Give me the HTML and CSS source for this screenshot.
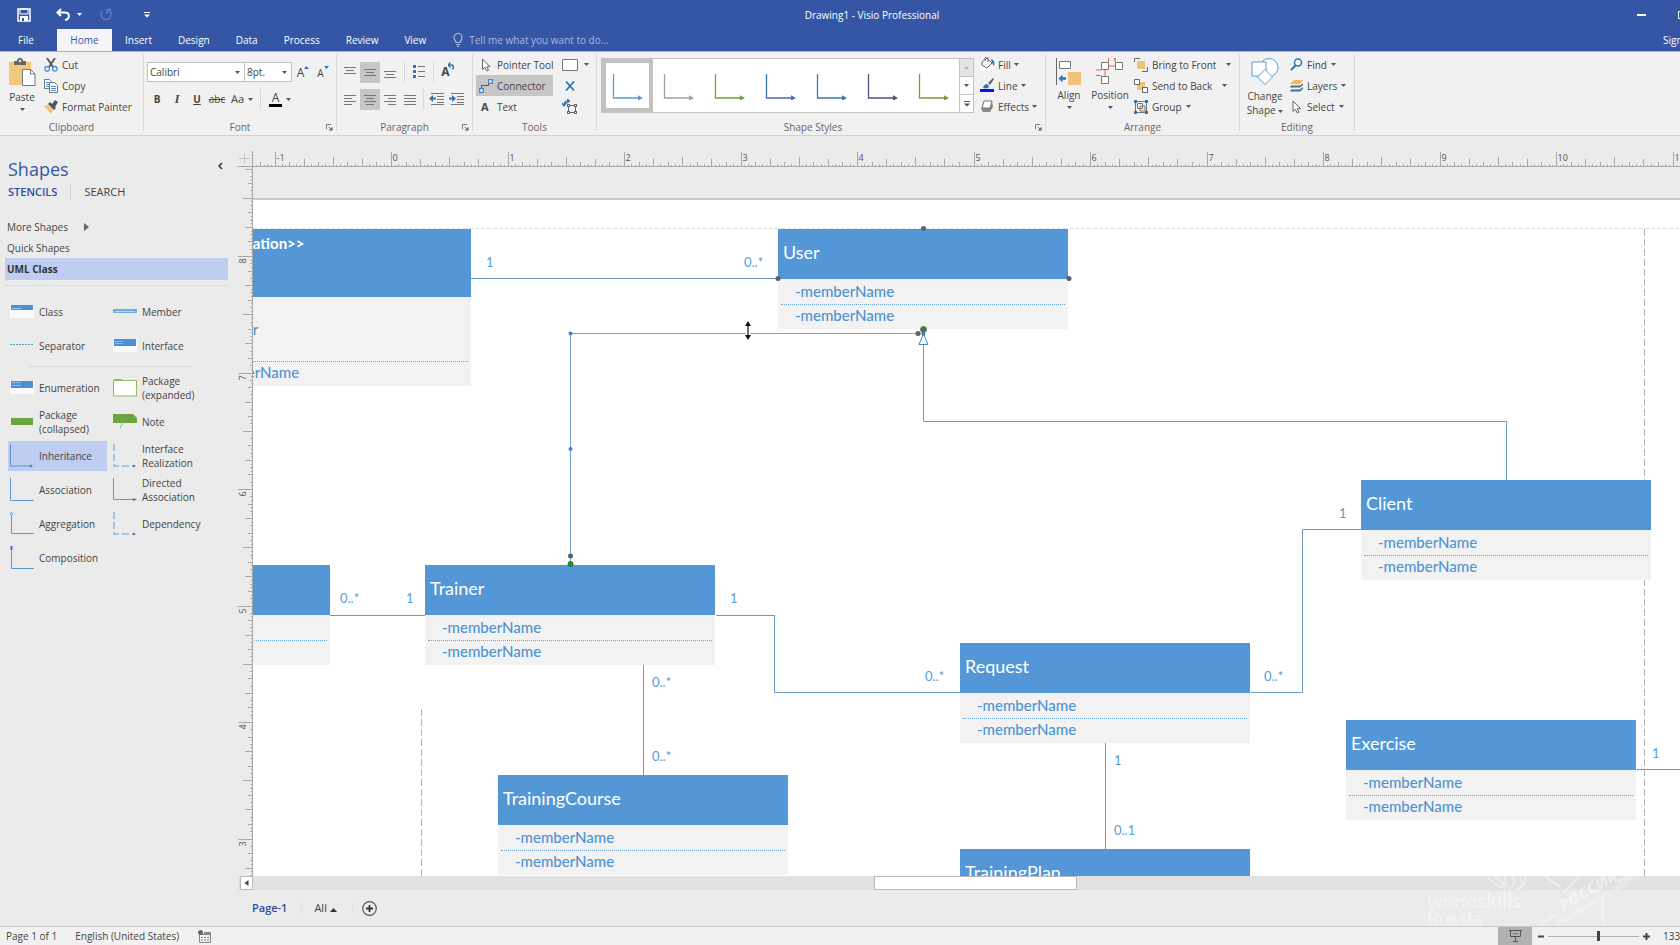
FILE: index.html
```html
<!DOCTYPE html>
<html lang="en">
<head>
<meta charset="utf-8">
<title>Drawing1 - Visio Professional</title>
<link rel="stylesheet" href="styles.css">
</head>
<body>
<svg class="defs" aria-hidden="true">
  <symbol id="caret" viewBox="0 0 5 3"><path d="M0 0h5L2.500 3z"/></symbol>
  <symbol id="launcher" viewBox="0 0 8 8"><path d="M.5 6V.5H6M3 3l3 3M7 3.500V7H3.500" fill="none" stroke="currentColor"/><path d="M7 4v3H4z"/></symbol>
  <symbol id="elbow" viewBox="0 0 32 28"><path d="M1.500 2v24H27" fill="none" stroke="currentColor" stroke-width="1.300"/><path d="M26 23.300l5 2.700-5 2.700z" fill="currentColor"/></symbol>
  <symbol id="pointer" viewBox="0 0 10 14"><path d="M1.500 1v10.500L4 9.300l1.800 3.700 1.700-.8-1.700-3.500H9z" fill="#fff" stroke="#666"/></symbol>
</svg>

<header class="topbar">
  <div class="titlebar">
    <div class="quick">
      <button class="tb-btn save" aria-label="Save"><svg width="14" height="14" viewBox="0 0 14 14"><path d="M1 1h12v12H1z" fill="none" stroke="#fff" stroke-width="1.500"/><path d="M3 1h8v5H3z" fill="none" stroke="#fff"/><path d="M3 8h8v5H3z" fill="#fff"/><path d="M5 10h2v3H5z" fill="#3556a5"/></svg></button>
      <button class="tb-btn undo" aria-label="Undo"><svg width="14" height="13" viewBox="0 0 14 13"><path d="M1.500 4.500H8.500c6 0 5.500 6.500.5 7.500M5 1L1.500 4.500 5 8" fill="none" stroke="#fff" stroke-width="2"/></svg></button>
      <button class="tb-btn undo-more" aria-label="Undo list"><svg width="5" height="3" fill="#fff"><use href="#caret"/></svg></button>
      <button class="tb-btn redo" aria-label="Repeat"><svg width="13" height="13" viewBox="0 0 13 13"><path d="M3.500 3A5 5 0 1 0 8 1.500M8 6V1.500h4" fill="none" stroke="#5f7bc0" stroke-width="1.500"/></svg></button>
      <button class="tb-btn" aria-label="Customize toolbar"><svg width="6" height="6" viewBox="0 0 6 6"><path d="M0 0h6v1H0zM0 2.500h6L3 5.500z" fill="#fff"/></svg></button>
    </div>
    <h1 class="doc-title">Drawing1 - Visio Professional</h1>
    <div class="window-btns">
      <button class="tb-btn" aria-label="Minimize"><svg width="9" height="2"><path d="M0 0h9v2H0z" fill="#fff"/></svg></button>
      <button class="tb-btn max" aria-label="Maximize"><svg width="9" height="8"><path d="M.5.5h8v7h-8z" fill="none" stroke="#fff"/></svg></button>
    </div>
  </div>
  <nav class="tabs">
    <button class="tab file">File</button>
    <button class="tab active">Home</button>
    <button class="tab">Insert</button>
    <button class="tab">Design</button>
    <button class="tab">Data</button>
    <button class="tab">Process</button>
    <button class="tab">Review</button>
    <button class="tab">View</button>
    <label class="tell"><svg width="10" height="14" viewBox="0 0 10 14"><path d="M3 9.500C3 8 1 7 1 4.500a4 4 0 0 1 8 0C9 7 7 8 7 9.500zM3 11.500h4M4 13.300h2" fill="none" stroke="#a9b9e2" stroke-width="1.200"/></svg><input type="text" aria-label="Tell me" placeholder="Tell me what you want to do..."></label>
    <a class="signin" href="#">Sign in</a>
  </nav>
</header>

<section class="ribbon" aria-label="Ribbon">
  <div class="group g-clip">
    <div class="tools">
      <button class="big paste"><svg width="28" height="29" viewBox="0 0 28 29"><path d="M1 4h22v23H1z" fill="#f1c880"/><path d="M6 3h3a3 3 0 0 1 6 0h3v4H6z" fill="#666"/><circle cx="12" cy="3" r="1.200" fill="#f1f1f1"/><path d="M14.500 11.500h8l4.500 4.500v11.500H14.500z" fill="#fff" stroke="#777"/><path d="M22.500 11.500V16H27" fill="none" stroke="#777"/></svg><span>Paste</span><svg class="caret"><use href="#caret"/></svg></button>
      <div class="col">
        <button class="cmd"><svg width="14" height="14" viewBox="0 0 14 14"><path d="M3 0l6 9M11 0L5 9" stroke="#555" stroke-width="1.800"/><circle cx="3.200" cy="10.800" r="2.300" fill="none" stroke="#4f8cc9" stroke-width="1.300"/><circle cx="10.800" cy="10.800" r="2.300" fill="none" stroke="#4f8cc9" stroke-width="1.300"/></svg>Cut</button>
        <button class="cmd"><svg width="14" height="14" viewBox="0 0 14 14"><path d="M.5.500h5l2 2v7h-7z" fill="#fff" stroke="#777"/><path d="M2 3.500h3M2 5.500h3M2 7.500h3" stroke="#4f8cc9"/><path d="M5.500 3.500h5l3 3v7h-8z" fill="#fff" stroke="#777"/><path d="M7 7.500h5M7 9.500h5M7 11.500h5" stroke="#4f8cc9"/></svg>Copy</button>
        <button class="cmd"><svg width="14" height="14" viewBox="0 0 14 14"><path d="M0 6l4-1 5 5-2 4z" fill="#f1c27a"/><path d="M4 4l2-2 6 6-2 2zM8 4l3-4 3 2-3 5z" fill="#555"/></svg>Format Painter</button>
      </div>
    </div>
    <h2>Clipboard</h2>
  </div>

  <div class="group g-font">
    <div class="tools rows">
      <div class="row">
        <span class="combo"><select class="font-name" aria-label="Font"><option>Calibri</option></select><svg class="caret"><use href="#caret"/></svg></span>
        <span class="combo"><select class="font-size" aria-label="Font size"><option>8pt.</option></select><svg class="caret"><use href="#caret"/></svg></span>
        <button class="ico grow" aria-label="Increase font size"><span class="letter">A</span><svg width="5" height="3" viewBox="0 0 5 3"><path d="M0 3h5L2.500 0z" fill="#2e75b6"/></svg></button>
        <button class="ico shrink" aria-label="Decrease font size"><span class="letter">A</span><svg width="5" height="3" fill="#2e75b6"><use href="#caret"/></svg></button>
      </div>
      <div class="row second">
        <button class="ico"><b>B</b></button>
        <button class="ico"><i class="ital">I</i></button>
        <button class="ico"><b class="under">U</b></button>
        <button class="ico"><s>abc</s></button>
        <button class="ico wide">Aa <svg class="caret"><use href="#caret"/></svg></button>
        <span class="vsep"></span>
        <button class="ico wide color"><span class="fc">A</span><svg class="caret"><use href="#caret"/></svg></button>
      </div>
    </div>
    <h2>Font</h2><button class="launch" aria-label="Font settings"><svg width="7" height="7"><use href="#launcher"/></svg></button>
  </div>

  <div class="group g-para">
    <div class="tools rows">
      <div class="row">
        <button class="ico" aria-label="Align top"><svg width="14" height="14"><path d="M1 2.500h12M3 5.500h8M1 8.500h12" stroke="#777"/></svg></button>
        <button class="ico on" aria-label="Align middle"><svg width="14" height="14"><path d="M1 4.500h12M3 7.500h8M1 10.500h12" stroke="#777"/></svg></button>
        <button class="ico" aria-label="Align bottom"><svg width="14" height="14"><path d="M1 6.500h12M3 9.500h8M1 12.500h12" stroke="#777"/></svg></button>
        <span class="vsep"></span>
        <button class="ico" aria-label="Bullets"><svg width="14" height="14"><path d="M1 0h3v3H1zM1 5h3v3H1zM1 10h3v3H1z" fill="#2e75b6"/><path d="M6 1.500h7M6 6.500h7M6 11.500h7" stroke="#777"/></svg></button>
        <span class="vsep"></span>
        <button class="ico" aria-label="Rotate text"><span class="rot">A</span><svg class="rot-arrow" width="7" height="8" viewBox="0 0 7 8"><path d="M0 3h3.500C6 3 6 5 4.500 7.500M2.500.5L0 3l2.500 2.500" fill="none" stroke="#2e75b6" stroke-width="1.400"/></svg></button>
      </div>
      <div class="row second">
        <button class="ico" aria-label="Align left"><svg width="14" height="14"><path d="M1 3.500h12M1 6.500h8M1 9.500h12M1 12.500h8" stroke="#777"/></svg></button>
        <button class="ico on" aria-label="Center"><svg width="14" height="14"><path d="M1 3.500h12M3 6.500h8M1 9.500h12M3 12.500h8" stroke="#777"/></svg></button>
        <button class="ico" aria-label="Align right"><svg width="14" height="14"><path d="M1 3.500h12M5 6.500h8M1 9.500h12M5 12.500h8" stroke="#777"/></svg></button>
        <button class="ico" aria-label="Justify"><svg width="14" height="14"><path d="M1 3.500h12M1 6.500h12M1 9.500h12M1 12.500h12" stroke="#777"/></svg></button>
        <span class="vsep tight"></span>
        <button class="ico" aria-label="Decrease indent"><svg width="16" height="14"><path d="M2 1.500h13M8 4.500h7M8 7.500h7M8 10.500h7M2 12.500h13" stroke="#777"/><path d="M0 6.500L4 3v2.500h3v2H4V10z" fill="#2e75b6"/></svg></button>
        <button class="ico" aria-label="Increase indent"><svg width="16" height="14"><path d="M2 1.500h13M8 4.500h7M8 7.500h7M8 10.500h7M2 12.500h13" stroke="#777"/><path d="M7 6.500L3 3v2.500H0v2h3V10z" fill="#2e75b6"/></svg></button>
      </div>
    </div>
    <h2>Paragraph</h2><button class="launch" aria-label="Paragraph settings"><svg width="7" height="7"><use href="#launcher"/></svg></button>
  </div>

  <div class="group g-tools">
    <div class="tools">
      <div class="col">
        <button class="cmd t"><svg width="14" height="14"><use href="#pointer"/></svg>Pointer Tool</button>
        <button class="cmd t on"><svg width="14" height="14" viewBox="0 0 14 14"><path d="M2.500 9.500V6.500h7V4" fill="none" stroke="#555"/><path d="M.7 9.700h3.600v3.600H.7zM9.700.7h3.600v3.600H9.700z" fill="#fff" stroke="#3d86c6" stroke-width="1.300"/></svg>Connector</button>
        <button class="cmd t"><b class="txt">A</b>Text</button>
      </div>
      <div class="col narrow">
        <button class="cmd" aria-label="Rectangle"><svg width="16" height="12"><path d="M.5.500h15v11H.5z" fill="#fff" stroke="#777"/></svg><svg class="caret"><use href="#caret"/></svg></button>
        <button class="cmd" aria-label="Connection point"><svg width="16" height="10"><path d="M4 .5l8 9M12 .5l-8 9" stroke="#2e75b6" stroke-width="1.800"/></svg></button>
        <button class="cmd" aria-label="Text block"><svg width="16" height="15" viewBox="0 0 16 15"><path d="M6.500 6.500h7v7h-7z" fill="none" stroke="#666"/><path d="M5 5h3v3H5zM12 5h3v3h-3zM5 12h3v3H5zM12 12h3v3h-3z" fill="#666"/><path d="M6.100 6h1v1h-1zM13 6h1v1h-1zM6 13h1v1H6zM13 13h1v1h-1z" fill="#fff"/><path d="M2 6c0-3 2-4 5-4M5 0l2.500 2L5 4M0 4l2 3 2.500-3" fill="none" stroke="#2e75b6" stroke-width="1.300"/></svg></button>
      </div>
    </div>
    <h2>Tools</h2>
  </div>

  <div class="group g-styles">
    <div class="tools">
      <div class="gallery">
        <button class="swatch sel c1" aria-label="Style 1"><svg width="32" height="28"><use href="#elbow"/></svg></button>
        <button class="swatch c2" aria-label="Style 2"><svg width="32" height="28"><use href="#elbow"/></svg></button>
        <button class="swatch c3" aria-label="Style 3"><svg width="32" height="28"><use href="#elbow"/></svg></button>
        <button class="swatch c4" aria-label="Style 4"><svg width="32" height="28"><use href="#elbow"/></svg></button>
        <button class="swatch c5" aria-label="Style 5"><svg width="32" height="28"><use href="#elbow"/></svg></button>
        <button class="swatch c6" aria-label="Style 6"><svg width="32" height="28"><use href="#elbow"/></svg></button>
        <button class="swatch c7" aria-label="Style 7"><svg width="32" height="28"><use href="#elbow"/></svg></button>
        <div class="gal-nav">
          <button class="off" aria-label="Previous"><svg width="5" height="3"><path d="M0 3h5L2.500 0z" fill="#b5b5b5"/></svg></button>
          <button aria-label="Next"><svg class="caret"><use href="#caret"/></svg></button>
          <button aria-label="More"><svg width="6" height="6" viewBox="0 0 6 6"><path d="M0 0h6v1H0zM0 2.500h6L3 5.500z" fill="#555"/></svg></button>
        </div>
      </div>
      <div class="col fills">
        <button class="cmd"><svg width="15" height="15" viewBox="0 0 15 15"><path d="M0 10h13v4H0z" fill="#fff"/><path d="M2 5l5-4 5 5-5 5-5-3zM5 4V1.500a1.500 1.500 0 0 1 3 0V5" fill="#fff" stroke="#666"/><path d="M11 2c3 1 4 3 3 7l-2-3z" fill="#2e75b6"/></svg>Fill <svg class="caret"><use href="#caret"/></svg></button>
        <button class="cmd"><svg width="15" height="15" viewBox="0 0 15 15"><path d="M0 11h14v3H0z" fill="#0a12ee"/><path d="M3 10c1-3 2-4 4-4l2 2c0 2-2 3-6 2z" fill="#2e75b6"/><path d="M8 5l5-5 1 1-4 6z" fill="#666"/></svg>Line <svg class="caret"><use href="#caret"/></svg></button>
        <button class="cmd"><svg width="15" height="15" viewBox="0 0 15 15"><path d="M4 2h8l1 6-3 5H3l-2-3z" fill="#888"/><path d="M4 2h8l-2 7H2z" fill="#fff" stroke="#777"/></svg>Effects <svg class="caret"><use href="#caret"/></svg></button>
      </div>
    </div>
    <h2>Shape Styles</h2><button class="launch" aria-label="Shape style settings"><svg width="7" height="7"><use href="#launcher"/></svg></button>
  </div>

  <div class="group g-arrange">
    <div class="tools">
      <button class="big align"><svg width="26" height="27" viewBox="0 0 26 27"><path d="M.5 0v27" stroke="#666"/><path d="M3.500 3.500h11v7h-11z" fill="#fff" stroke="#777"/><path d="M12 14h13v13H12z" fill="#f1c27a"/><path d="M2.500 20.500l4-4v2.800H10v2.400H6.500v2.800z" fill="#2e75b6"/></svg><span>Align</span><svg class="caret"><use href="#caret"/></svg></button>
      <button class="big position"><svg width="28" height="27" viewBox="0 0 28 27"><path d="M12.500 0v4M19 0v3.500M13 8h6M9 12v6M0 12h5M0 17.500h5M19 0v4" stroke="#dd6b4d" fill="none"/><path d="M5.500 4.500h7v7h-7zM19.500 4.500h7v7h-7zM5.500 18.500h7v7h-7z" fill="#fff" stroke="#777"/></svg><span>Position</span><svg class="caret"><use href="#caret"/></svg></button>
      <div class="col arr">
        <button class="cmd"><svg width="14" height="14" viewBox="0 0 14 14"><path d="M3 3h8v8H3z" fill="#f1c27a"/><path d="M.5 4V.5H6M8 13.500h5.500V9" fill="none" stroke="#666"/></svg>Bring to Front <svg class="caret gap"><use href="#caret"/></svg></button>
        <button class="cmd"><svg width="14" height="14" viewBox="0 0 14 14"><path d="M3 3h8v8H3z" fill="#f1c27a"/><path d="M.5.500h5v5h-5zM8.500 8.500h5v5h-5z" fill="#fff" stroke="#666"/></svg>Send to Back <svg class="caret gap"><use href="#caret"/></svg></button>
        <button class="cmd"><svg width="14" height="14" viewBox="0 0 14 14"><path d="M1.500 1.500h11v11h-11zM3.500 3.500h5v5h-5zM6 6h5v5H6z" fill="none" stroke="#777"/><path d="M0 0h3v3H0zM11 0h3v3h-3zM0 11h3v3H0zM11 11h3v3h-3z" fill="#2e75b6"/></svg>Group <svg class="caret"><use href="#caret"/></svg></button>
      </div>
    </div>
    <h2>Arrange</h2>
  </div>

  <div class="group g-edit">
    <div class="tools">
      <button class="big change"><svg width="28" height="28" viewBox="0 0 28 28"><circle cx="18" cy="9.500" r="9" fill="#fff" stroke="#5b9bd5"/><path d="M1 4h14v14H1z" fill="#fff" stroke="#5b9bd5"/><path d="M14 11.500l7.500 7.500-7.500 7.500L6.500 19z" fill="#fff" stroke="#5b9bd5"/></svg><span>Change</span><span>Shape <svg class="caret"><use href="#caret"/></svg></span></button>
      <div class="col ed">
        <button class="cmd"><svg width="13" height="13" viewBox="0 0 13 13"><circle cx="8" cy="4.500" r="3.500" fill="#fff" stroke="#2e75b6" stroke-width="1.500"/><path d="M5.500 7.500L1 12" stroke="#2e75b6" stroke-width="2"/></svg>Find <svg class="caret"><use href="#caret"/></svg></button>
        <button class="cmd"><svg width="13" height="13" viewBox="0 0 13 13"><path d="M4 1h9l-3 4H0z" fill="#f1b864"/><path d="M1 6.500h9l3-2v1.500l-3 2.500H0z" fill="#666"/><path d="M1 10.500h9l3-2.500v2l-3 2.500H0z" fill="#2e75b6"/></svg>Layers <svg class="caret"><use href="#caret"/></svg></button>
        <button class="cmd"><svg width="13" height="14"><use href="#pointer"/></svg>Select <svg class="caret"><use href="#caret"/></svg></button>
      </div>
    </div>
    <h2>Editing</h2>
  </div>
</section>

<main class="main">
  <aside class="pane">
    <div class="pane-head"><h2>Shapes</h2><button aria-label="Collapse pane"><svg width="5" height="8"><path d="M4 1L1 4l3 3" fill="none" stroke="#333" stroke-width="1.500"/></svg></button></div>
    <div class="pane-tabs"><button class="cur">STENCILS</button><button>SEARCH</button></div>
    <div class="stencils">
      <button>More Shapes <svg width="5" height="8"><path d="M0 0l5 4-5 4z" fill="#666"/></svg></button>
      <button>Quick Shapes</button>
      <button class="cur">UML Class</button>
    </div>
    <div class="shape-grid first">
      <button class="shape"><svg width="24" height="24"><path d="M0 5h24v13H0z" fill="#fafafa"/><path d="M1 5h22v5H1z" fill="#4a90d6"/><path d="M2 8.500h10" stroke="#9cc4ec"/></svg>Class</button>
      <button class="shape"><svg width="24" height="24"><path d="M0 9h24v4H0z" fill="#76aadb"/><path d="M2 11.500h20" stroke="#b7d2ee"/></svg>Member</button>
      <button class="shape"><svg width="24" height="24"><path d="M0 10.500h24" stroke="#4f9dcc" stroke-dasharray="2 1"/></svg>Separator</button>
      <button class="shape"><svg width="24" height="24"><path d="M0 5h24v13H0z" fill="#fafafa"/><path d="M1 5h22v7H1z" fill="#4a90d6"/><path d="M2 7.500h8M2 9.500h8" stroke="#8dbbe9"/></svg>Interface</button>
    </div>
    <hr class="pane-line">
    <div class="shape-grid">
      <button class="shape"><svg width="24" height="24"><path d="M0 5h24v13H0z" fill="#fafafa"/><path d="M1 5h22v7H1z" fill="#4a90d6"/><path d="M2 6.500h9M2 9.500h9" stroke="#8dbbe9"/></svg>Enumeration</button>
      <button class="shape"><svg width="24" height="24"><path d="M.5 4.500h23V20H.5z" fill="#fff" stroke="#8dbb68"/><path d="M1 3h8v2H1z" fill="#8dbb68"/></svg>Package<br>(expanded)</button>
      <button class="shape"><svg width="24" height="24"><path d="M1 8h22v7H1z" fill="#6ea43f"/></svg>Package<br>(collapsed)</button>
      <button class="shape"><svg width="24" height="24"><path d="M0 4h20l4 4v5H0z" fill="#6ea43f"/><path d="M10 12l-3 6" stroke="#8dbb68"/></svg>Note</button>
      <button class="shape cur"><svg width="24" height="24"><path d="M.5 0v22H22" fill="none" stroke="#5b8fd0"/><path d="M20 20.500l3 1.500-3 1.500z" fill="#3d78c2"/></svg>Inheritance</button>
      <button class="shape"><svg width="24" height="24"><path d="M1 0v22H22" fill="none" stroke="#5b9bd5" stroke-dasharray="7 3"/><path d="M20 20.500l3 1.500-3 1.500z" fill="#3d78c2"/></svg>Interface<br>Realization</button>
      <button class="shape"><svg width="24" height="24"><path d="M.5 0v22.500H24" fill="none" stroke="#5b9bd5"/></svg>Association</button>
      <button class="shape"><svg width="24" height="24"><path d="M.5 0v21.500H23" fill="none" stroke="#5b9bd5"/><path d="M20 20l4 1.500-4 1.500z" fill="#3d78c2"/></svg>Directed<br>Association</button>
      <button class="shape"><svg width="24" height="24"><path d="M1.500 3v18.500H24" fill="none" stroke="#5b9bd5"/><circle cx="1.500" cy="1.800" r="1.200" fill="#fff" stroke="#5b9bd5"/></svg>Aggregation</button>
      <button class="shape"><svg width="24" height="24"><path d="M1 0v22H22" fill="none" stroke="#5b9bd5" stroke-dasharray="7 3"/><path d="M20 20.500l3 1.500-3 1.500z" fill="#3d78c2"/></svg>Dependency</button>
      <button class="shape"><svg width="24" height="24"><path d="M1.500 0v22.500H24" fill="none" stroke="#5b9bd5"/><path d="M.5 0h2v4h-2z" fill="#3d78c2"/></svg>Composition</button>
    </div>
  </aside>

  <section class="work">
    <div class="corner"><svg width="15" height="16"><path d="M6.500 2v10M1 7.500h11" stroke="#c4c4c4"/><path d="M0 15.500h15M14.500 0v16" stroke="#a5a5a5"/></svg></div>
    <svg class="ruler-h" id="rulerH"></svg>
    <svg class="ruler-v" id="rulerV"></svg>

    <div class="canvas">
      <div class="page"></div>
      <svg class="wires" aria-hidden="true">
        <path class="guide faint" d="M0 61.500H3000"/>
        <path class="guide" d="M1391.500 62V3000M168.500 542V3000"/>
        <g class="wire">
          <path d="M218 111.500H526M77 448.500H172M463 448.500H521.500V525.500H707M998 525.500H1049.500V362.500H1108"/>
          <path d="M1253.500 313V254.500H670.500V177M390.500 498V608M852.500 575V682M1384 602.500H3000"/>
        </g>
      </svg>

      <article class="node enum" style="left:-72px;top:62px"><h3>&lt;&lt;Enumeration&gt;&gt;</h3><p>-member</p><p class="sep">-memberName</p></article>
      <article class="node" style="left:525px;top:62px"><h3>User</h3><p>-memberName</p><p class="sep">-memberName</p></article>
      <article class="node" style="left:-213px;top:398px"><h3></h3><p></p><p class="sep"></p></article>
      <article class="node" style="left:172px;top:398px"><h3>Trainer</h3><p>-memberName</p><p class="sep">-memberName</p></article>
      <article class="node" style="left:245px;top:608px"><h3>TrainingCourse</h3><p>-memberName</p><p class="sep">-memberName</p></article>
      <article class="node" style="left:707px;top:476px"><h3>Request</h3><p>-memberName</p><p class="sep">-memberName</p></article>
      <article class="node" style="left:707px;top:682px"><h3>TrainingPlan</h3><p>-memberName</p><p class="sep">-memberName</p></article>
      <article class="node" style="left:1108px;top:313px"><h3>Client</h3><p>-memberName</p><p class="sep">-memberName</p></article>
      <article class="node" style="left:1093px;top:553px"><h3>Exercise</h3><p>-memberName</p><p class="sep">-memberName</p></article>

      <span class="mult" style="left:233px;top:86px">1</span>
      <span class="mult" style="left:491px;top:86px">0..*</span>
      <span class="mult" style="left:87px;top:422px">0..*</span>
      <span class="mult" style="left:153px;top:422px">1</span>
      <span class="mult" style="left:477px;top:422px">1</span>
      <span class="mult" style="left:399px;top:506px">0..*</span>
      <span class="mult" style="left:399px;top:580px">0..*</span>
      <span class="mult" style="left:672px;top:500px">0..*</span>
      <span class="mult" style="left:1011px;top:500px">0..*</span>
      <span class="mult" style="left:861px;top:584px">1</span>
      <span class="mult" style="left:861px;top:654px">0..1</span>
      <span class="mult" style="left:1086px;top:337px">1</span>
      <span class="mult" style="left:1399px;top:577px">1</span>

      <svg class="wires" aria-hidden="true">
        <path class="picked" d="M317.500 397V166.500H670"/>
        <path d="M670.500 167L675 177.500H666z" fill="#fff" stroke="#4a86c5"/>
        <g fill="#3c7fd6"><circle cx="317.500" cy="166.500" r="2"/><circle cx="317.500" cy="282" r="2"/><circle cx="670.500" cy="167" r="2"/></g>
        <g fill="#606060"><circle cx="670.500" cy="61.500" r="2.500"/><circle cx="525" cy="111.500" r="2.500"/><circle cx="816" cy="111.500" r="2.500"/><circle cx="665" cy="166.500" r="2.500"/><circle cx="317.500" cy="389" r="2.500"/></g>
        <circle cx="670.500" cy="162.500" r="3" fill="#606060" stroke="#3f8f3f"/>
        <circle cx="317.500" cy="397" r="2.500" fill="#14a014" stroke="#1b6d2a"/>
        <path d="M495 155v19" stroke="#fff" stroke-width="4"/>
        <path d="M495 157v13" stroke="#222" stroke-width="1.300"/><path d="M492 159l3-5 3 5zM492 168l3 5 3-5z" fill="#111"/>
      </svg>
    </div>

    <div class="hscroll">
      <button aria-label="Scroll left"><svg width="5" height="8"><path d="M4.500 1v6L.5 4z" fill="#444"/></svg></button>
      <div class="track"><span class="before"></span><span class="thumb"></span><span class="after"></span></div>
    </div>
    <div class="page-tabs">
      <button class="cur">Page-1</button>
      <button class="all">All <svg width="7" height="4"><path d="M0 4h7L3.500 0z" fill="#333"/></svg></button>
      <button class="add" aria-label="Insert page"><svg width="15" height="15"><circle cx="7.500" cy="7.500" r="6.800" fill="none" stroke="#555" stroke-width="1.200"/><path d="M4 7.500h7M7.500 4v7" stroke="#333" stroke-width="1.800"/></svg></button>
    </div>
    <svg class="mark" width="220" height="64" viewBox="0 0 220 64" aria-hidden="true">
      <g fill="#fff">
        <text x="0" y="46" class="mk-world">world<tspan class="mk-skills">skills</tspan></text>
        <text x="0" y="63" class="mk-world">Russia</text>
        <text class="mk-ru" transform="translate(136 50) rotate(-31)">РОССИЯ</text>
        <text class="mk-sub" transform="translate(132 64) rotate(-31)">НАЦИОНАЛЬНАЯ СБОРНАЯ</text>
      </g>
      <g fill="none" stroke="#fff" stroke-width="2"><path d="M60 14q6 9 18 12M66 14q7 3 12 10M78 14q-1 8 4 12M86 14q3 7-2 12M92 14q8 7-4 14M98 14q3 9-8 14M118 14l16 12M137 30L152 14M176 36v25M112 63l20-12M190 20l16-7"/></g>
    </svg>
  </section>
</main>

<footer class="status">
  <span class="pg">Page 1 of 1</span>
  <span class="lang">English (United States)</span>
  <svg class="macro" width="13" height="13"><path d="M1.500 4.500h11v8h-11z" fill="none" stroke="#888"/><path d="M6 2h7v3H6z" fill="#888"/><circle cx="2.500" cy="2.500" r="2.500" fill="#666"/><path d="M3 7.500h8M3 10h8" stroke="#888" stroke-dasharray="2 1"/></svg>
  <button class="present" aria-label="Presentation mode"><svg width="13" height="12"><path d="M0 .5h13M1.500.5v6h10v-6M6.500 7v4M4 11.500h5" fill="none" stroke="#555"/><path d="M4 3.500h5" stroke="#777"/></svg></button>
  <button class="zbtn" aria-label="Zoom out"><svg width="7" height="7"><path d="M0 2.500h6v2H0z" fill="#444"/></svg></button>
  <input class="zoom" type="range" min="0" max="100" value="56" aria-label="Zoom">
  <button class="zbtn" aria-label="Zoom in"><svg width="7" height="7"><path d="M0 3.500h7M3.500 0v7" stroke="#444" stroke-width="2"/></svg></button>
  <span class="pct">133%</span>
</footer>
<script src="rulers.js"></script>
</body>
</html>
```
FILE: rulers.js
```js
const NS = 'http://www.w3.org/2000/svg';
const INCH = 116.5;

function tickLength(i) {
  if (i % 32 === 0) return 15;
  if (i % 16 === 0) return 10;
  if (i % 8 === 0) return 8;
  if (i % 4 === 0) return 5;
  if (i % 2 === 0) return 3;
  return 2;
}

function add(svg, name, attrs, text) {
  const el = document.createElementNS(NS, name);
  for (const key in attrs) el.setAttribute(key, attrs[key]);
  if (text !== undefined) el.textContent = text;
  svg.appendChild(el);
}

function drawHorizontal(svg, zero) {
  const length = svg.clientWidth;
  let d = 'M0 15.5H' + length;
  for (let i = Math.ceil(-zero / INCH * 32); zero + i * INCH / 32 < length; i++) {
    const x = Math.round(zero + i * INCH / 32) + 0.5;
    d += 'M' + x + ' ' + (16 - tickLength(i)) + 'V16';
    if (i % 32 === 0) add(svg, 'text', { x: x + 1, y: 10 }, i / 32);
  }
  add(svg, 'path', { d });
}

function drawVertical(svg, eight) {
  const length = svg.clientHeight;
  let d = 'M14.5 0V' + length;
  for (let i = Math.ceil(-eight / INCH * 32); eight + i * INCH / 32 < length; i++) {
    const y = Math.round(eight + i * INCH / 32) + 0.5;
    d += 'M' + (15 - tickLength(i)) + ' ' + y + 'H15';
    if (i % 32 === 0) add(svg, 'text', { transform: 'translate(8 ' + (y + 7) + ') rotate(-90)' }, 8 - i / 32);
  }
  add(svg, 'path', { d });
}

drawHorizontal(document.getElementById('rulerH'), 138);
drawVertical(document.getElementById('rulerV'), 89);
```
FILE: styles.css
```css
* { box-sizing: border-box; }
html, body { height: 100%; }
body {
  margin: 0;
  display: flex;
  flex-direction: column;
  overflow: hidden;
  background: #ebebeb;
  color: #444;
  font: 10px/14px "Open Sans", "Noto Sans", sans-serif;
}
h1, h2, h3, p { margin: 0; font-weight: 400; }
button, input, select { font: inherit; color: inherit; }
button { margin: 0; padding: 0; border: 0; background: none; white-space: nowrap; }
svg { flex: none; }
.defs { position: absolute; width: 0; height: 0; }
.caret { width: 5px; height: 3px; fill: #555; vertical-align: middle; }

/* title bar and tabs */
.topbar { background: #3556a5; color: #fff; flex: none; border-bottom: 1px solid #9db2dc; }
.titlebar { display: grid; grid-template-columns: 1fr auto 1fr; height: 29px; align-items: center; }
.quick { display: flex; align-items: center; padding-left: 17px; }
.tb-btn { display: flex; align-items: center; }
.undo { margin-left: 25px; }
.undo-more { margin-left: 7px; }
.redo { margin: 0 32px 0 17px; }
.doc-title { font-size: 10px; font-weight: 500; padding-left: 64px; }
.window-btns { display: flex; justify-content: flex-end; align-items: center; gap: 32px; overflow: hidden; }
.max { width: 2px; overflow: hidden; }
.tabs { display: flex; align-items: stretch; height: 22px; font-weight: 500; overflow: hidden; }
.tab { padding: 0 13px; }
.tab.file { width: 57px; padding: 0 5px 0 0; }
.tab.active { background: #f5f5f5; color: #3556a5; width: 55px; padding: 0; }
.tell { display: flex; align-items: center; gap: 6px; margin-left: 14px; }
.tell input { width: 200px; border: 0; padding: 0; background: none; }
.tell input::placeholder { color: #a9b9e2; opacity: 1; }
.signin { width: 17px; margin-left: auto; color: #fff; text-decoration: none; white-space: nowrap; line-height: 22px; }

/* ribbon */
.ribbon { display: flex; flex: none; height: 84px; background: #f1f1f1; border-bottom: 1px solid #d2d2d2; }
.group { position: relative; display: flex; flex-direction: column; justify-content: space-between; margin: 2px 0 4px; border-right: 1px solid #dadada; flex: none; }
.group h2 { font-size: 10px; text-align: center; color: #666; line-height: 8px; }
.launch { position: absolute; right: 3px; bottom: 0; color: #666; fill: #666; line-height: 0; }
.tools { display: flex; }
.g-clip { width: 144px; }
.g-font { width: 193px; }
.g-para { width: 136px; }
.g-tools { width: 124px; }
.g-styles { width: 449px; }
.g-styles h2 { padding-right: 16px; }
.g-arrange { width: 194px; }
.g-edit { width: 115px; }
.col { display: flex; flex-direction: column; align-items: flex-start; }
.cmd { display: flex; align-items: center; gap: 4px; height: 21px; }
.big { display: flex; flex-direction: column; align-items: center; padding-top: 4px; }
.big span { line-height: 14px; }
.big > svg:first-child { margin-bottom: 3px; }
.big .caret { margin-top: 4px; }
.big span .caret { margin-top: 0; }
.on { background: #c6c6c6; }
.paste { width: 44px; }
.rows { flex-direction: column; padding-top: 8px; }
.row { display: flex; align-items: center; height: 20px; padding: 0 3px; }
.row.second { margin-top: 7px; }
.combo { position: relative; display: flex; align-items: center; }
.combo select { appearance: none; height: 20px; padding: 0 2px; margin: 0 -1px 0 0; border: 1px solid #c2c2c2; border-radius: 0; background: #fff; font-size: 10px; }
.combo .caret { position: absolute; right: 4px; pointer-events: none; }
.font-name { width: 98px; }
.font-size { width: 48px; }
.ico { display: flex; align-items: center; justify-content: center; width: 20px; height: 21px; flex: none; }
.ico b, .ital { font-size: 10px; }
.ital { font-family: "Liberation Serif", serif; font-weight: 700; font-size: 12px; }
.under { text-decoration: underline; }
.ico.wide { width: 28px; gap: 4px; font-size: 11px; margin-left: 1px; }
.color { margin-left: 0; }
.fc { line-height: 12px; border-bottom: 3px solid #000; padding: 0 3px; font-size: 12px; }
.grow { margin-left: 2px; align-items: flex-start; padding-top: 4px; }
.shrink { align-items: flex-start; padding-top: 4px; }
.grow .letter { font-size: 12px; }
.vsep { width: 1px; height: 20px; margin: 0 4px; background: #d8d8d8; }
.vsep.tight { margin: 0 3px; }
.rot { font-weight: 700; font-size: 12px; }
.rot-arrow { align-self: flex-start; margin-left: -2px; }
.g-tools .tools { padding-left: 3px; }
.cmd.t { width: 77px; padding-left: 3px; }
.cmd .txt { width: 14px; padding-left: 2px; font-size: 11px; text-align: left; }
.narrow { padding-left: 9px; }
.narrow .cmd { gap: 6px; }
.g-styles .tools { padding: 0 0 0 4px; }
.gallery { display: flex; height: 55px; margin-top: 4px; border: 1px solid #c2c2c2; background: #fff; }
.swatch { width: 51px; display: flex; align-items: center; justify-content: center; }
.swatch.sel { border: 4px solid #c2c2c2; }
.gal-nav { width: 14px; display: flex; flex-direction: column; border-left: 1px solid #c2c2c2; }
.gal-nav button { flex: 1; display: flex; align-items: center; justify-content: center; border-bottom: 1px solid #c2c2c2; }
.gal-nav button:last-child { border-bottom: 0; }
.gal-nav .off { background: #e4e4e4; }
.c1 { color: #5b9bd5; } .c2 { color: #a0a0a0; } .c3 { color: #70a042; } .c4 { color: #3f6fc0; }
.c5 { color: #3d7ba8; } .c6 { color: #5a4f78; } .c7 { color: #8d9138; }
.fills { padding-left: 6px; }
.fills .cmd { gap: 3px; }
.align { margin-left: 9px; width: 28px; }
.position { margin-left: 6px; width: 42px; }
.arr { margin-left: 3px; }
.gap { margin-left: 6px; }
.change { width: 38px; margin-left: 6px; }
.ed { margin-left: 6px; }

/* shapes pane */
.main { flex: 1; display: flex; min-height: 0; }
.pane { width: 238px; flex: none; padding: 21px 10px 0 5px; }
.pane-head { display: flex; justify-content: space-between; align-items: center; padding: 0 5px 0 3px; height: 24px; }
.pane-head h2 { font-size: 18px; line-height: 24px; color: #3556a5; }
.pane-head button { display: flex; margin-bottom: 6px; }
.pane-tabs { display: flex; padding: 4px 0 0 3px; }
.pane-tabs button { font-size: 11px; line-height: 14px; }
.pane-tabs .cur { color: #2b4ba0; font-weight: 600; padding-right: 13px; margin-right: 13px; border-right: 1px solid #cfcfcf; }
.stencils { display: flex; flex-direction: column; margin-top: 17px; padding-bottom: 5px; border-bottom: 1px solid #dadada; }
.stencils button { display: flex; align-items: center; gap: 16px; height: 21px; padding-left: 2px; }
.stencils .cur { height: 22px; background: #bfcdf1; color: #333; font-weight: 700; }
.shape-grid { display: grid; grid-template-columns: 99px 99px; column-gap: 4px; grid-auto-rows: 30px; row-gap: 4px; padding-left: 3px; }
.shape-grid.first { padding-top: 11px; }
.pane-line { width: 164px; height: 1px; margin: 5px 0 6px 23px; border: 0; background: #dadada; }
.shape { display: flex; align-items: center; gap: 5px; padding-left: 2px; text-align: left; line-height: 14px; height: 30px; }
.shape.cur { background: #bfcdf1; }

/* drawing area */
.work { position: relative; flex: 1; min-width: 0; display: grid; grid-template: 16px 1fr 14px 36px / 15px 1fr; padding-top: 15px; overflow: hidden; }
.corner { line-height: 0; }
.ruler-h { width: 100%; height: 16px; }
.ruler-v { width: 15px; height: 100%; }
.ruler-h path, .ruler-v path { stroke: #a8a8a8; fill: none; }
.ruler-h text, .ruler-v text { font-size: 9px; fill: #555; }
.canvas { position: relative; overflow: hidden; font-family: Lato, sans-serif; min-height: 0; }
.page { position: absolute; inset: 31px 0 0; background: #fff; border-top: 2px solid #c8c8c8; }
.wires { position: absolute; inset: 0; width: 100%; height: 100%; }
.guide { stroke: #b4b4b4; stroke-dasharray: 7 3; fill: none; }
.faint { stroke: #dedede; stroke-dasharray: 4 2; }
.wire { stroke: #6a9cc9; fill: none; }
.picked { stroke: #74a5d0; fill: none; stroke-width: 1; }
.node { position: absolute; width: 290px; background: #f2f2f2; color: #4f93d2; font-size: 15px; }
.node h3 { height: 50px; padding-left: 5px; background: #5497d7; color: #fff; font-size: 18px; line-height: 47px; }
.node p { height: 25px; padding-left: 17px; line-height: 25px; font-weight: 500; }
.node .sep { margin: 0 3px; padding-left: 14px; border-top: 1px dotted #6fa6d8; line-height: 20px; }
.enum h3 { height: 68px; padding: 4px 0 0 3px; font-size: 15px; line-height: 20px; font-weight: 700; }
.enum p { height: 64px; padding: 19px 0 0 17px; line-height: 26px; }
.enum .sep { height: 25px; padding: 0 0 0 16px; line-height: 20px; }
.mult { position: absolute; color: #5b9bd5; font-size: 13px; line-height: 18px; }
.hscroll { grid-column: 1 / -1; display: flex; background: #e1e1e1; padding-left: 2px; }
.hscroll button { width: 13px; display: flex; align-items: center; justify-content: center; border: 1px solid #b8b8b8; background: #fff; }
.track { flex: 1; display: flex; }
.before { flex: 622; }
.thumb { flex: 201; background: #fff; border: 1px solid #b8b8b8; }
.after { flex: 604; }
.page-tabs { grid-column: 1 / -1; display: flex; align-items: center; padding-left: 14px; }
.page-tabs button { font-size: 11px; }
.page-tabs .cur { color: #2b4ba0; font-weight: 600; padding-right: 14px; border-right: 1px solid #e0e0e0; }
.page-tabs .all { padding: 0 15px 0 12px; border-right: 1px solid #e0e0e0; }
.add { margin-left: 9px; display: flex; }
.mark { position: absolute; right: 33px; bottom: 0; opacity: 0.4; }
.mk-world { font-family: Lato, sans-serif; font-size: 20px; }
.mk-skills { font-weight: 900; }
.mk-ru { font-size: 16px; font-weight: 800; font-style: italic; }
.mk-sub { font-size: 7px; font-weight: 700; }

/* status bar */
.status { flex: none; display: flex; align-items: center; height: 19px; padding-left: 6px; background: #f1f1f1; border-top: 1px solid #c9c9c9; overflow: hidden; }
.lang { margin-left: 18px; }
.macro { margin-left: 19px; }
.present { margin-left: auto; width: 34px; height: 18px; display: flex; align-items: center; justify-content: center; background: #b2b2b2; }
.zbtn { width: 7px; margin-left: 6px; display: flex; flex: none; }
.zoom { appearance: none; width: 91px; height: 18px; margin: 0 0 0 3px; background: linear-gradient(#b0b0b0, #b0b0b0) center / 100% 1px no-repeat; }
.zoom::-webkit-slider-thumb { appearance: none; width: 3px; height: 10px; background: #444; }
.zoom + .zbtn { margin-left: 4px; }
.pct { width: 17px; margin-left: 13px; white-space: nowrap; flex: none; }
```
